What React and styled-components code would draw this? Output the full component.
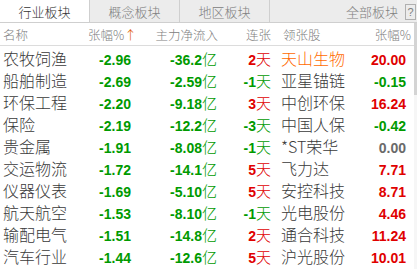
import React from "react";
import styled, { createGlobalStyle } from "styled-components";

const Global = createGlobalStyle`
  html, body { margin: 0; padding: 0; background: #ffffff; }
  body { font-family: "Noto Sans CJK SC", "Liberation Sans", sans-serif; }
`;

const Wrap = styled.div`
  width: 417px;
  height: 269px;
  overflow: hidden;
  display: flex;
  flex-direction: column;
  background: #ffffff;
`;

const TabBar = styled.div`
  height: 22px;
  display: flex;
  align-items: stretch;
  background: #ececec;
  border-bottom: 1px solid #cfcfcf;
`;

const Tab = styled.div`
  width: 89px;
  border-right: 1px solid #cfcfcf;
  background: ${(p) => (p.$active ? "#ffffff" : "#ececec")};
  color: ${(p) => (p.$active ? "#333333" : "#808080")};
  font-size: 13px;
  font-weight: 300;
  display: flex;
  align-items: center;
  justify-content: center;
  padding-top: 1px;
`;

const TabSpacer = styled.div`
  flex: 1;
`;

const AllTab = styled.div`
  display: flex;
  align-items: center;
  color: #808080;
  font-size: 13px;
  font-weight: 300;
  padding-right: 7px;
  padding-top: 1px;
`;

const Help = styled.div`
  width: 9px;
  height: 14px;
  border: 1px solid #b0b0b0;
  color: #808080;
  font-family: "Liberation Sans", sans-serif;
  font-size: 11px;
  display: flex;
  align-items: center;
  justify-content: center;
  align-self: center;
  margin-right: 1px;
  margin-top: 1px;
`;

const Body = styled.div`
  flex: 1;
  display: flex;
`;

const Table = styled.div`
  width: 414px;
  display: flex;
  flex-direction: column;
`;

const Scroll = styled.div`
  width: 3px;
  display: flex;
  flex-direction: column;
  background: #f6f6f6;
`;

const Thumb = styled.div`
  height: 72px;
  background: #d4d4d4;
`;

const cols = "88px 45px 86px 55px 92px 48px";

const HeadRow = styled.div`
  height: 22px;
  display: grid;
  grid-template-columns: ${cols};
  align-items: center;
  border-bottom: 1px solid #dcdcdc;
  color: #808080;
  font-size: 12.5px;
  font-weight: 300;
`;

const Row = styled.div`
  height: 22px;
  display: grid;
  grid-template-columns: ${cols};
  align-items: center;
`;

const Cell = styled.div`
  white-space: nowrap;
  text-align: ${(p) => (p.$right ? "right" : "left")};
  padding-left: ${(p) => p.$pl || 0}px;
  padding-right: ${(p) => p.$pr || 0}px;
  color: ${(p) => p.$color || "inherit"};
`;

const Name = styled(Cell)`
  font-size: 16px;
  font-weight: 300;
  color: ${(p) => p.$color || "#3a3a3a"};
`;

const Num = styled.span`
  font-family: "Liberation Sans", Arial, sans-serif;
  font-weight: bold;
  font-size: 14px;
`;

const Unit = styled.span`
  font-size: 15px;
  font-weight: 300;
`;

const Arrow = styled.span`
  color: #e05a00;
`;

const GREEN = "#009a00";
const RED = "#e00000";
const GRAY = "#6a6a6a";

const colorOf = (s) => (s.startsWith("-") ? GREEN : parseFloat(s) === 0 ? GRAY : RED);

const data = [
  ["农牧饲渔", "-2.96", "-36.2", "2", "天山生物", "20.00", true],
  ["船舶制造", "-2.69", "-2.59", "-1", "亚星锚链", "-0.15"],
  ["环保工程", "-2.20", "-9.18", "3", "中创环保", "16.24"],
  ["保险", "-2.19", "-12.2", "-3", "中国人保", "-0.42"],
  ["贵金属", "-1.91", "-8.08", "-1", "*ST荣华", "0.00"],
  ["交运物流", "-1.72", "-14.1", "5", "飞力达", "7.71"],
  ["仪器仪表", "-1.69", "-5.10", "5", "安控科技", "8.71"],
  ["航天航空", "-1.53", "-8.10", "-1", "光电股份", "4.46"],
  ["输配电气", "-1.51", "-14.8", "2", "通合科技", "11.24"],
  ["汽车行业", "-1.44", "-12.6", "5", "沪光股份", "10.01"],
];

export default function App() {
  return (
    <Wrap>
      <Global />
      <TabBar>
        <Tab $active>行业板块</Tab>
        <Tab>概念板块</Tab>
        <Tab>地区板块</Tab>
        <TabSpacer />
        <AllTab>全部板块</AllTab>
        <Help>?</Help>
      </TabBar>
      <Body>
        <Table>
          <HeadRow>
            <Cell $pl={3}>名称</Cell>
            <Cell $right $pr={5}>
              张幅%<Arrow>↑</Arrow>
            </Cell>
            <Cell $right $pr={1}>主力净流入</Cell>
            <Cell $right $pr={3}>连张</Cell>
            <Cell $pl={9}>领张股</Cell>
            <Cell $right $pr={3}>张幅%</Cell>
          </HeadRow>
          {data.map((r) => {
            const days = parseInt(r[3], 10);
            const dayColor = days < 0 ? GREEN : RED;
            return (
              <Row key={r[0]}>
                <Name $pl={3}>{r[0]}</Name>
                <Cell $right $pr={2} $color={colorOf(r[1])}>
                  <Num>{r[1]}</Num>
                </Cell>
                <Cell $right $pr={2} $color={colorOf(r[2])}>
                  <Num>{r[2]}</Num>
                  <Unit>亿</Unit>
                </Cell>
                <Cell $right $pr={3} $color={dayColor}>
                  <Num>{r[3]}</Num>
                  <Unit>天</Unit>
                </Cell>
                <Name $pl={7} $color={r[6] ? "#ff6a00" : undefined}>
                  {r[4]}
                </Name>
                <Cell $right $pr={8} $color={colorOf(r[5])}>
                  <Num>{r[5]}</Num>
                </Cell>
              </Row>
            );
          })}
        </Table>
        <Scroll>
          <Thumb />
        </Scroll>
      </Body>
    </Wrap>
  );
}
